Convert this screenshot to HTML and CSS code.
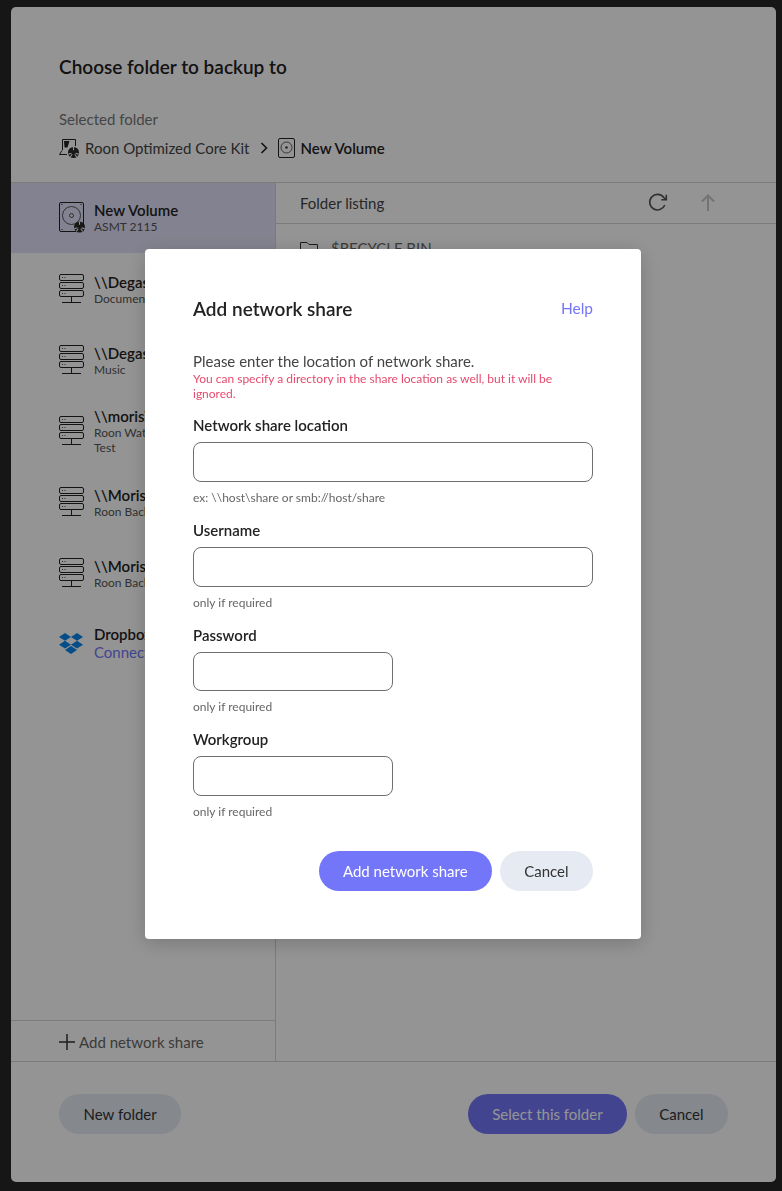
FILE: index.html
```html
<!DOCTYPE html>
<html lang="en">
<head>
<meta charset="utf-8">
<title>Choose folder to backup to</title>
<link rel="stylesheet" href="styles.css">
</head>
<body>
<svg class="defs" width="0" height="0" aria-hidden="true">
  <defs>
    <g id="badge">
      <circle cx="0" cy="0" r="5.500" fill="#2a2a2a"/>
      <path d="M0-5.500V-2.200M-5.200 1.700L-2.100.7M5.200 1.700L2.100.7M-3.200 4.500L-1.300 1.800M3.200 4.500L1.300 1.800" stroke="#fff" stroke-width="1.100" fill="none"/>
    </g>
    <g id="server" fill="none" stroke="#222" stroke-width="1">
      <rect x=".5" y=".5" width="24" height="6" rx="1.500"/>
      <rect x=".5" y="8.500" width="24" height="6" rx="1.500"/>
      <rect x=".5" y="16.500" width="24" height="6" rx="1.500"/>
      <path d="M12.500 22.500V28.500M3 28.500H22"/>
      <path d="M3 3.500H4M5.500 3.500H6.500M3 11.500H4M5.500 11.500H6.500M3 19.500H4M5.500 19.500H6.500" stroke-width=".8"/>
    </g>
  </defs>
</svg>

<main class="dialog">
  <header class="dialog-head">
    <h1 class="dialog-title">Choose folder to backup to</h1>
    <div class="crumb-label">Selected folder</div>
    <div class="crumbs">
      <svg class="crumb-icon" width="21" height="20" viewBox="0 0 21 20">
        <path d="M3.500 12V1.500H16.500V8" fill="none" stroke="#222"/>
        <path d="M5 3H10.500L8.500 9.500H5.500Z" fill="#222"/>
        <path d="M3 12.500L.5 16.500H8" fill="none" stroke="#222"/>
        <use href="#badge" x="14.500" y="14.500"/>
      </svg>
      <span>Roon Optimized Core Kit</span>
      <svg class="crumb-sep" width="8" height="12" viewBox="0 0 8 12"><path d="M1.500 1L6.500 6L1.500 11" fill="none" stroke="#222" stroke-width="1.600"/></svg>
      <svg class="crumb-icon" width="17" height="20" viewBox="0 0 17 20">
        <rect x=".5" y=".5" width="16" height="19" rx="1.500" fill="none" stroke="#222"/>
        <circle cx="8.500" cy="9.500" r="5.500" fill="none" stroke="#333" stroke-width=".8"/>
        <circle cx="8.500" cy="9.500" r="1.200" fill="#333"/>
      </svg>
      <strong class="crumb-current">New Volume</strong>
    </div>
  </header>

  <div class="panes">
    <aside class="sidebar">
      <ul class="drives">
        <li class="drive is-selected">
          <svg class="drive-icon" width="27" height="31" viewBox="0 0 27 31">
            <rect x=".5" y=".5" width="24" height="29" rx="1.500" fill="none" stroke="#222"/>
            <circle cx="12.500" cy="13.500" r="9" fill="none" stroke="#333" stroke-width=".8"/>
            <circle cx="12.500" cy="13.500" r="2" fill="none" stroke="#333" stroke-width=".8"/>
            <path d="M2.500 2.500H3.500M21.500 2.500H22.500M2.500 27.500H3.500" stroke="#222"/>
            <use href="#badge" x="20.500" y="25"/>
          </svg>
          <div class="drive-text"><div class="drive-name">New Volume</div><div class="drive-sub drive-sub-small">ASMT 2115</div></div>
        </li>
        <li class="drive">
          <svg class="drive-icon" width="27" height="30" viewBox="0 0 27 30"><use href="#server"/></svg>
          <div class="drive-text"><div class="drive-name">\\Degas\Documents</div><div class="drive-sub">Documents</div></div>
        </li>
        <li class="drive">
          <svg class="drive-icon" width="27" height="30" viewBox="0 0 27 30"><use href="#server"/></svg>
          <div class="drive-text"><div class="drive-name">\\Degas\Music</div><div class="drive-sub">Music</div></div>
        </li>
        <li class="drive">
          <svg class="drive-icon" width="27" height="30" viewBox="0 0 27 30"><use href="#server"/></svg>
          <div class="drive-text"><div class="drive-name">\\moris\Test</div><div class="drive-sub">Roon Watched<br>Test</div></div>
        </li>
        <li class="drive">
          <svg class="drive-icon" width="27" height="30" viewBox="0 0 27 30"><use href="#server"/></svg>
          <div class="drive-text"><div class="drive-name">\\Moris\Backup</div><div class="drive-sub">Roon Backup</div></div>
        </li>
        <li class="drive">
          <svg class="drive-icon" width="27" height="30" viewBox="0 0 27 30"><use href="#server"/></svg>
          <div class="drive-text"><div class="drive-name">\\Moris\Backup2</div><div class="drive-sub">Roon Backup</div></div>
        </li>
        <li class="drive">
          <svg class="drive-icon drive-icon-logo" width="24" height="22" viewBox="0 0 24 22"><path fill="#0a85ec" d="M6 0L0 3.900L6 7.800L12 3.900ZM18 0L12 3.900L18 7.800L24 3.900ZM0 11.700L6 15.600L12 11.700L6 7.800ZM18 7.800L12 11.700L18 15.600L24 11.700ZM6 17L12 20.900L18 17L12 13.100Z"/></svg>
          <div class="drive-text drive-text-link"><div class="drive-name">Dropbox</div><div class="drive-link">Connect</div></div>
        </li>
      </ul>
      <div class="add-share">
        <svg width="16" height="16" viewBox="0 0 16 16"><path d="M8 0V16M0 8H16" stroke="#333" stroke-width="1.500"/></svg>
        <span>Add network share</span>
      </div>
    </aside>

    <section class="listing">
      <div class="listing-head">
        <span class="listing-title">Folder listing</span>
        <div class="listing-tools">
          <svg width="20" height="20" viewBox="0 0 20 20"><path d="M16.800 12A7.800 7.800 0 1 1 15.800 4.500L18 6.500M18.300 1.800V6.800H13.300" fill="none" stroke="#555" stroke-width="1.600"/></svg>
          <svg width="14" height="18" viewBox="0 0 14 18"><path d="M7 17V2M1 7.500L7 1.500L13 7.500" fill="none" stroke="#c8c8c8" stroke-width="2"/></svg>
        </div>
      </div>
      <div class="folder-row">
        <svg width="18" height="15" viewBox="0 0 18 15"><path d="M.5 14.500V1.500H7L9 3.500H17.500V14.500Z" fill="none" stroke="#333"/></svg>
        <span>$RECYCLE.BIN</span>
      </div>
    </section>
  </div>

  <footer class="dialog-foot">
    <button class="btn btn-soft btn-new">New folder</button>
    <div class="foot-right">
      <button class="btn btn-primary">Select this folder</button>
      <button class="btn btn-soft btn-cancel">Cancel</button>
    </div>
  </footer>
</main>

<div class="scrim">
  <form class="modal">
    <div class="modal-head">
      <h2 class="modal-title">Add network share</h2>
      <a class="modal-help">Help</a>
    </div>
    <p class="modal-intro">Please enter the location of network share.</p>
    <p class="modal-warn">You can specify a directory in the share location as well, but it will be ignored.</p>
    <div class="field">
      <label class="field-label">Network share location</label>
      <input class="field-input" type="text">
      <div class="field-hint">ex: \\host\share or smb://host/share</div>
    </div>
    <div class="field">
      <label class="field-label">Username</label>
      <input class="field-input" type="text">
      <div class="field-hint">only if required</div>
    </div>
    <div class="field">
      <label class="field-label">Password</label>
      <input class="field-input field-short" type="password">
      <div class="field-hint">only if required</div>
    </div>
    <div class="field">
      <label class="field-label">Workgroup</label>
      <input class="field-input field-short" type="text">
      <div class="field-hint">only if required</div>
    </div>
    <div class="modal-actions">
      <button class="btn btn-primary" type="button">Add network share</button>
      <button class="btn btn-soft btn-cancel" type="button">Cancel</button>
    </div>
  </form>
</div>
</body>
</html>
```

FILE: styles.css
```css
* { box-sizing: border-box; }

html, body { height: 100%; }

body {
  margin: 0;
  padding: 7px 6px 9px 11px;
  background: #262626;
  font-family: Lato, "Liberation Sans", sans-serif;
  color: #222;
  overflow: hidden;
}

.defs { position: absolute; }

.dialog {
  height: 100%;
  background: #fff;
  border-radius: 5px;
  display: flex;
  flex-direction: column;
  overflow: hidden;
}

.dialog-head {
  height: 175px;
  padding: 47px 48px 0;
  flex: none;
}

.dialog-title {
  margin: 0;
  font-size: 19px;
  line-height: 25px;
  font-weight: 600;
  color: #222;
}

.crumb-label {
  margin-top: 30px;
  font-size: 15px;
  line-height: 20px;
  color: #777;
}

.crumbs {
  margin-top: 6px;
  display: flex;
  align-items: center;
  height: 26px;
  font-size: 15px;
  color: #444;
}

.crumb-icon { margin-right: 5px; flex: none; }
.crumb-sep { margin: 0 10px 0 11px; flex: none; }
.crumb-current { font-weight: 600; color: #222; }

.panes {
  flex: 1;
  display: flex;
  min-height: 0;
  border-top: 1px solid #d4d4d4;
}

.sidebar {
  width: 265px;
  flex: none;
  display: flex;
  flex-direction: column;
  border-right: 1px solid #d4d4d4;
}

.drives {
  list-style: none;
  margin: 0;
  padding: 0;
  flex: 1;
}

.drive {
  height: 71px;
  padding-left: 48px;
  display: flex;
  align-items: center;
  gap: 8px;
}

.drive.is-selected { height: 70px; margin-bottom: 1px; background: #e2e1f8; }

.drive-icon { flex: none; margin-bottom: 1px; }
.drive-icon-logo { margin-right: 3px; }

.drive-text { min-width: 0; white-space: nowrap; margin-bottom: 1px; }
.drive-text-link { margin-bottom: 4px; }

.drive-name { font-size: 15px; line-height: 18px; font-weight: 600; }

.drive-sub { font-size: 12px; line-height: 15px; color: #555; }

.drive-link { font-size: 15px; line-height: 18px; color: #7476f9; }

.add-share {
  height: 41px;
  flex: none;
  border-top: 1px solid #d4d4d4;
  padding: 1px 0 0 48px;
  display: flex;
  align-items: center;
  gap: 4px;
  font-size: 15px;
  color: #666;
}

.listing { flex: 1; min-width: 0; }

.listing-head {
  height: 41px;
  border-bottom: 1px solid #d4d4d4;
  padding: 0 61px 0 24px;
  display: flex;
  align-items: center;
  justify-content: space-between;
}

.listing-title { font-size: 15px; color: #444; }

.listing-tools { display: flex; align-items: center; gap: 33px; }

.folder-row {
  height: 48px;
  padding-left: 24px;
  display: flex;
  align-items: center;
  gap: 13px;
  font-size: 15px;
  color: #666;
}

.dialog-foot {
  height: 121px;
  flex: none;
  border-top: 1px solid #d4d4d4;
  padding: 32px 48px 0;
  display: flex;
  justify-content: space-between;
  align-items: flex-start;
}

.foot-right { display: flex; gap: 8px; }

.btn {
  height: 40px;
  padding: 0 24px;
  border: 0;
  border-radius: 20px;
  font-family: inherit;
  font-size: 15px;
}

.btn-primary { background: #7476f9; color: #fff; }
.btn-soft { background: #e6eaf3; color: #333; }
.btn-new { padding: 0 24.500px; }
.btn-cancel { padding: 0 24.500px; }

.scrim {
  position: fixed;
  inset: 0;
  background: rgba(0, 0, 0, .42);
  display: flex;
  justify-content: center;
  padding: 249px 0 0 4px;
}

.modal {
  width: 496px;
  height: 690px;
  background: #fff;
  border-radius: 4px;
  padding: 48px;
  box-shadow: 0 4px 20px rgba(0, 0, 0, .2);
}

.modal-head {
  display: flex;
  justify-content: space-between;
  align-items: center;
  height: 24px;
}

.modal-title { margin: -1px 0 0; font-size: 19px; font-weight: 600; color: #222; }

.modal-help { font-size: 15.500px; color: #7476f9; margin-top: -2px; }

.modal-intro {
  margin: 30px 0 0;
  font-size: 15px;
  line-height: 20px;
  color: #444;
}

.modal-warn {
  margin: 0 0 14.400px;
  font-size: 12px;
  line-height: 15px;
  color: #e64a6e;
}

.field { height: 104.670px; }

.field-label {
  display: block;
  font-size: 15px;
  line-height: 20px;
  font-weight: 600;
  color: #222;
}

.field-input {
  display: block;
  width: 100%;
  height: 39.670px;
  margin-top: 7px;
  border: 1px solid #6f6f6f;
  border-radius: 8px;
  background: #fff;
  font: inherit;
}

.field-short { width: 200px; }

.field-hint {
  margin-top: 7px;
  font-size: 12px;
  line-height: 18px;
  color: #666;
}

.modal-actions {
  margin-top: 16.500px;
  display: flex;
  justify-content: flex-end;
  gap: 8px;
}
```
